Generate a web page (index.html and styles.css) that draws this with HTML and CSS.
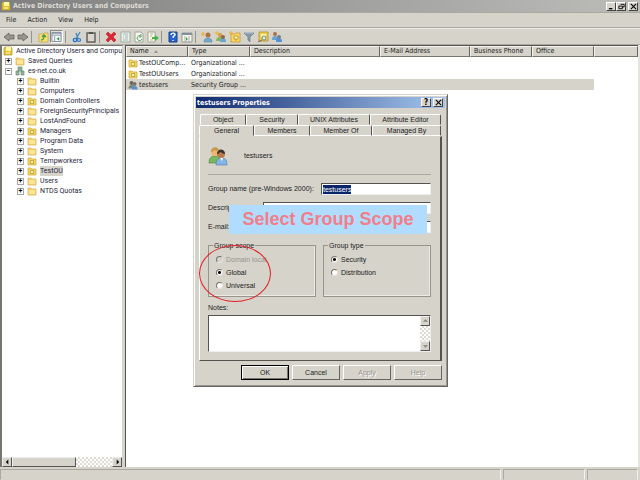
FILE: index.html
```html
<!DOCTYPE html>
<html lang="en">
<head>
<meta charset="utf-8">
<title>Active Directory Users and Computers</title>
<link rel="stylesheet" href="styles.css">
</head>
<body>
<svg class="defs" aria-hidden="true">
  <symbol id="i-folder" viewBox="0 0 10 10"><path d="M1 2h3l1 1h4v6H1z" fill="#f3d36f" stroke="#d9b764" stroke-width=".8"/><path d="M2 4h6v4H2z" fill="#fbe596"/></symbol>
  <symbol id="i-ou" viewBox="0 0 10 10"><path d="M1 2h3l1 1h4v6H1z" fill="#f3d658" stroke="#cfae4a" stroke-width=".8"/><path d="M3.500 4.500h3v3h-3z" fill="#fff2a5" stroke="#a8923e" stroke-width=".7"/></symbol>
  <symbol id="i-book" viewBox="0 0 10 10"><path d="M2 1h6l1 1v7H1V2z" fill="#e6c62f" stroke="#a8933b" stroke-width=".7"/><path d="M3 1h5v4H3z" fill="#fff7a8"/><path d="M3 7h4" stroke="#fffbd5"/></symbol>
  <symbol id="i-domain" viewBox="0 0 10 10"><path d="M3 1h4v4H3zM1 5h3v4H1zM6 5h3v4H6z" fill="#9fb5a4" stroke="#6f8776" stroke-width=".7"/><path d="M4 2h2M2 6h1M7 6h1" stroke="#4bbf5d"/></symbol>
  <symbol id="i-group" viewBox="0 0 20 20"><path d="M1 17c0-5 2-7 6-7s5 3 5 7z" fill="#78b85c" stroke="#4b8540" stroke-width=".6"/><circle cx="7" cy="6" r="4" fill="#efb66d"/><path d="M3 6c0-6 8-6 8-1-3 0-4-1-5-1-1 1-1 2-3 2z" fill="#c9974b"/><path d="M8 19c0-5 2-7 6-7s5 3 5 7z" fill="#85b5e5" stroke="#5079ad" stroke-width=".6"/><circle cx="13" cy="8" r="4" fill="#b87b4c"/><path d="M9 8c0-6 8-6 8 0-2 0-4-2-5-2-1 1-1 2-3 2z" fill="#38332f"/><path d="M12 12l2 3 1-3z" fill="#fff"/></symbol>
  <symbol id="i-gray-group" viewBox="0 0 20 20"><path d="M1 17c0-5 2-7 6-7s5 3 5 7z" fill="#738872"/><circle cx="7" cy="6" r="4" fill="#6d6759"/><path d="M8 19c0-5 2-7 6-7s5 3 5 7z" fill="#5c8fd2"/><circle cx="13" cy="8" r="4" fill="#77716d"/></symbol>
  <symbol id="i-back" viewBox="0 0 12 12"><path d="M1 6l5-4v2h5v4H6v2z" fill="#96958e" stroke="#63625d" stroke-width=".8"/></symbol>
  <symbol id="i-forward" viewBox="0 0 12 12"><path d="M11 6L6 2v2H1v4h5v2z" fill="#96958e" stroke="#63625d" stroke-width=".8"/></symbol>
  <symbol id="i-up" viewBox="0 0 12 12"><path d="M2 3h4l1-1h4v9H2z" fill="#f6df73" stroke="#c8a846" stroke-width=".8"/><path d="M4 9c3 0 3-2 3-4M5 6l2-2 2 2" fill="none" stroke="#40983b" stroke-width="1.300"/></symbol>
  <symbol id="i-window" viewBox="0 0 12 12"><path d="M1 1h10v10H1z" fill="#f7f8f8" stroke="#7b8794"/><path d="M1 2h10M1 4h10" stroke="#8393ac"/><path d="M4 5v6" stroke="#8793a0"/><path d="M9 6v4L6 8z" fill="#3a9b54"/></symbol>
  <symbol id="i-cut" viewBox="0 0 12 12"><path d="M9 1L5 8M5 2l2 6" stroke="#4287bd" stroke-width="1.300"/><circle cx="4" cy="9" r="1.700" fill="none" stroke="#2674c5" stroke-width="1.300"/><circle cx="8" cy="9" r="1.500" fill="none" stroke="#2674c5" stroke-width="1.200"/></symbol>
  <symbol id="i-paste" viewBox="0 0 12 12"><path d="M2 2h8v9H2z" fill="#d9d7d0" stroke="#64635f" stroke-width="1.500"/><path d="M4 1h4v2H4z" fill="#55544f"/></symbol>
  <symbol id="i-delete" viewBox="0 0 12 12"><path d="M1 3l2-2 3 3 3-3 2 2-3 3 3 3-2 2-3-3-3 3-2-2 3-3z" fill="#df2632" stroke="#a91824" stroke-width=".5"/></symbol>
  <symbol id="i-props" viewBox="0 0 12 12"><path d="M2 1h9v10H2z" fill="#eef2ed" stroke="#9ca9a3"/><path d="M4 3h5M4 5h1M6 5h3M4 7h1M6 7h3M4 9h5" stroke="#88aaa0" stroke-width=".8"/></symbol>
  <symbol id="i-refresh" viewBox="0 0 12 12"><path d="M2 1h6l2 2v8H2z" fill="#f4f4ee" stroke="#a4a6a0"/><path d="M8 5a2.500 2.500 0 1 0 1 3M8 3v3H6" fill="none" stroke="#55aa62"/></symbol>
  <symbol id="i-export" viewBox="0 0 12 12"><path d="M1 1h7v10H1z" fill="#fafae9" stroke="#a4a491"/><path d="M3 3h3M3 5h2M3 9h3" stroke="#b4b4a6"/><path d="M5 6h3V4l4 3-4 3V8H5z" fill="#45b448"/></symbol>
  <symbol id="i-help" viewBox="0 0 12 12"><path d="M2 1h8v10H2z" fill="#2864cc" stroke="#173f91"/><path d="M4 4c0-3 5-2 4 0-1 1-2 1-2 3M6 9v1" fill="none" stroke="#fff" stroke-width="1.300"/></symbol>
  <symbol id="i-view" viewBox="0 0 12 12"><path d="M1 2h10v9H1z" fill="#f5f6ef" stroke="#919990"/><path d="M1 3h10" stroke="#83909b" stroke-width="2"/><path d="M4 5v6M8 5v6" stroke="#abafaa"/><path d="M5 6l2 2-2 2z" fill="#46a34d"/></symbol>
  <symbol id="i-user" viewBox="0 0 12 12"><path d="M3 11c0-3 2-4 4-4s4 1 4 4z" fill="#72a9cf" stroke="#52789c" stroke-width=".5"/><circle cx="7" cy="4" r="2.500" fill="#a97546"/><path d="M2 1v4M0 3h4" stroke="#f2b326" stroke-width="1.200"/></symbol>
  <symbol id="i-newgroup" viewBox="0 0 12 12"><path d="M1 10c0-3 2-4 4-4s3 2 3 4z" fill="#81b75c"/><circle cx="5" cy="4" r="2.200" fill="#d99e50"/><path d="M5 11c0-3 1-4 3-4s3 1 3 4z" fill="#6ba2d3"/><circle cx="8" cy="6" r="2" fill="#8c6849"/><path d="M2 0v4M0 2h4" stroke="#f2b326"/></symbol>
  <symbol id="i-addto" viewBox="0 0 12 12"><path d="M1 9c0-3 1-4 3-4s3 1 3 4z" fill="#6ba2d3"/><circle cx="4" cy="3" r="2" fill="#a97546"/><path d="M5 11c0-3 1-4 3-4s3 1 3 4z" fill="#4f93d6"/><circle cx="8" cy="6" r="2" fill="#77818b"/></symbol>
  <symbol id="i-newou" viewBox="0 0 12 12"><path d="M2 3h4l1-1h4v9H2z" fill="#f8da62" stroke="#c99a37" stroke-width=".8"/><path d="M5 5h4v3H5zM7 8v2" fill="#fff6ba" stroke="#b58b30" stroke-width=".8"/><path d="M2 0v4M0 2h4" stroke="#f0ae29"/></symbol>
  <symbol id="i-filter" viewBox="0 0 12 12"><path d="M1 2h10L7 6v5L5 9V6z" fill="#819aac" stroke="#6a7b88" stroke-width=".7"/><path d="M2 2h8" stroke="#b7cad5"/></symbol>
  <symbol id="i-find" viewBox="0 0 12 12"><path d="M2 1h9v9H2z" fill="#edcf4f" stroke="#b18e34" stroke-width=".8"/><path d="M4 3h5v3H4z" fill="#fff6af"/><circle cx="7" cy="7" r="2" fill="#e5f2e4" stroke="#718778"/><path d="M1 11l4-2" stroke="#796c44"/></symbol>
</svg>
<main class="console">
  <header class="titlebar">
    <svg class="ic10"><use href="#i-book"/></svg>
    <h1>Active Directory Users and Computers</h1>
    <div class="winbtns">
      <button class="cap" aria-label="Minimize"><svg viewBox="0 0 8 8"><path d="M1 6.500h4" stroke="#000" stroke-width="1.500"/></svg></button><button class="cap" aria-label="Restore"><svg viewBox="0 0 8 8"><path d="M3 1.500h4v3H5M1 3.500h4v3H1z" fill="none" stroke="#000"/></svg></button><button class="cap apart" aria-label="Close"><svg viewBox="0 0 8 8"><path d="M1 1l6 6M7 1L1 7" stroke="#000" stroke-width="1.200"/></svg></button>
    </div>
  </header>
  <nav class="menubar"><button>File</button><button>Action</button><button>View</button><button>Help</button></nav>
  <div class="toolbar">
    <button aria-label="Back"><svg><use href="#i-back"/></svg></button>
    <button aria-label="Forward"><svg><use href="#i-forward"/></svg></button>
    <i class="sep"></i>
    <button aria-label="Up one level"><svg><use href="#i-up"/></svg></button>
    <button class="on" aria-label="Show console tree"><svg><use href="#i-window"/></svg></button>
    <i class="sep"></i>
    <button aria-label="Cut"><svg><use href="#i-cut"/></svg></button>
    <button aria-label="Paste"><svg><use href="#i-paste"/></svg></button>
    <i class="sep"></i>
    <button aria-label="Delete"><svg><use href="#i-delete"/></svg></button>
    <button aria-label="Properties"><svg><use href="#i-props"/></svg></button>
    <button aria-label="Refresh"><svg><use href="#i-refresh"/></svg></button>
    <button aria-label="Export list"><svg><use href="#i-export"/></svg></button>
    <i class="sep"></i>
    <button aria-label="Help topics"><svg><use href="#i-help"/></svg></button>
    <button aria-label="Action pane"><svg><use href="#i-view"/></svg></button>
    <i class="sep"></i>
    <button aria-label="New user"><svg><use href="#i-user"/></svg></button>
    <button aria-label="New group"><svg><use href="#i-newgroup"/></svg></button>
    <button aria-label="New organizational unit"><svg><use href="#i-newou"/></svg></button>
    <button aria-label="Filter"><svg><use href="#i-filter"/></svg></button>
    <button aria-label="Find"><svg><use href="#i-find"/></svg></button>
    <button aria-label="Add to group"><svg><use href="#i-addto"/></svg></button>
  </div>
  <div class="panes">
    <section class="treepane">
      <ul class="tree">
        <li class="root"><svg class="ic10"><use href="#i-book"/></svg><span>Active Directory Users and Comput</span></li>
        <li><b class="box">+</b><svg class="ic10"><use href="#i-folder"/></svg><span>Saved Queries</span></li>
        <li><b class="box">−</b><svg class="ic10"><use href="#i-domain"/></svg><span>es-net.co.uk</span></li>
      </ul>
      <ul class="tree sub">
        <li><b class="box">+</b><svg class="ic10"><use href="#i-folder"/></svg><span>Builtin</span></li>
        <li><b class="box">+</b><svg class="ic10"><use href="#i-folder"/></svg><span>Computers</span></li>
        <li><b class="box">+</b><svg class="ic10"><use href="#i-ou"/></svg><span>Domain Controllers</span></li>
        <li><b class="box">+</b><svg class="ic10"><use href="#i-folder"/></svg><span>ForeignSecurityPrincipals</span></li>
        <li><b class="box">+</b><svg class="ic10"><use href="#i-folder"/></svg><span>LostAndFound</span></li>
        <li><b class="box">+</b><svg class="ic10"><use href="#i-ou"/></svg><span>Managers</span></li>
        <li><b class="box">+</b><svg class="ic10"><use href="#i-folder"/></svg><span>Program Data</span></li>
        <li><b class="box">+</b><svg class="ic10"><use href="#i-folder"/></svg><span>System</span></li>
        <li><b class="box">+</b><svg class="ic10"><use href="#i-ou"/></svg><span>Tempworkers</span></li>
        <li><b class="box">+</b><svg class="ic10"><use href="#i-ou"/></svg><span class="sel">TestOU</span></li>
        <li><b class="box">+</b><svg class="ic10"><use href="#i-folder"/></svg><span>Users</span></li>
        <li><b class="box">+</b><svg class="ic10"><use href="#i-folder"/></svg><span>NTDS Quotas</span></li>
      </ul>
      <div class="hscroll"><button class="sb" aria-label="Scroll left"><svg viewBox="0 0 6 6"><path d="M4 0v6L1 3z"/></svg></button><div class="thumb"></div><div class="track"></div><button class="sb" aria-label="Scroll right"><svg viewBox="0 0 6 6"><path d="M2 0v6l3-3z"/></svg></button></div>
    </section>
    <section class="listpane">
      <table>
        <colgroup><col class="c1"><col class="c2"><col class="c3"><col class="c4"><col class="c5"><col class="c6"><col></colgroup>
        <thead><tr><th>Name <i class="asc"></i></th><th>Type</th><th>Description</th><th>E-Mail Address</th><th>Business Phone</th><th>Office</th><th></th></tr></thead>
        <tbody>
          <tr><td><div class="cell"><svg class="ic10"><use href="#i-ou"/></svg>TestOUComp...</div></td><td>Organizational ...</td><td></td><td></td><td></td><td></td><td></td></tr>
          <tr><td><div class="cell"><svg class="ic10"><use href="#i-ou"/></svg>TestOUUsers</div></td><td>Organizational ...</td><td></td><td></td><td></td><td></td><td></td></tr>
          <tr class="picked"><td><div class="cell"><svg class="ic10"><use href="#i-gray-group"/></svg>testusers</div></td><td>Security Group ...</td><td></td><td></td><td></td><td></td><td></td></tr>
        </tbody>
      </table>
    </section>
  </div>
  <footer class="status"><span class="s1"></span><span class="s2"></span><span class="s3"></span></footer>

  <form class="dialog" role="dialog" aria-labelledby="dlg">
    <div class="dtitle"><h2 id="dlg">testusers Properties</h2><button type="button" class="cap" aria-label="Help"><b>?</b></button><button type="button" class="cap apart" aria-label="Close"><svg viewBox="0 0 8 8"><path d="M1 1l6 6M7 1L1 7" stroke="#000" stroke-width="1.200"/></svg></button></div>
    <div class="dbody">
      <div class="tabs back"><button type="button" class="w46">Object</button><button type="button" class="w52">Security</button><button type="button" class="w72">UNIX Attributes</button><button type="button" class="w70">Attribute Editor</button></div>
      <div class="tabs"><button type="button" class="w55 active">General</button><button type="button" class="w56">Members</button><button type="button" class="w62">Member Of</button><button type="button" class="w68">Managed By</button></div>
      <div class="panel">
        <div class="who"><svg><use href="#i-group"/></svg><span>testusers</span></div>
        <div class="field"><label for="gn">Group name (pre-Windows 2000):</label><div class="textbox"><input id="gn" value="testusers"></div></div>
        <div class="field near"><label for="ds">Description:</label><input id="ds" class="plain"></div>
        <div class="field near"><label for="em">E-mail:</label><input id="em" class="plain"></div>
        <div class="groups">
          <fieldset><legend>Group scope</legend>
            <label class="off"><input type="radio" name="scope" disabled>Domain local</label>
            <label><input type="radio" name="scope" checked>Global</label>
            <label><input type="radio" name="scope">Universal</label>
          </fieldset>
          <fieldset><legend>Group type</legend>
            <label><input type="radio" name="type" checked>Security</label>
            <label><input type="radio" name="type">Distribution</label>
          </fieldset>
        </div>
        <label class="notes" for="nt">Notes:</label>
        <div class="memo"><textarea id="nt"></textarea><div class="vscroll"><button type="button" class="sb dim" aria-label="Scroll up"><svg viewBox="0 0 6 6"><path d="M0 4h6L3 1z"/></svg></button><div class="track"></div><button type="button" class="sb dim" aria-label="Scroll down"><svg viewBox="0 0 6 6"><path d="M0 2h6L3 5z"/></svg></button></div></div>
      </div>
      <div class="actions"><button type="button" class="default">OK</button><button type="button">Cancel</button><button type="button" disabled>Apply</button><button type="button" disabled>Help</button></div>
    </div>
    <div class="ring"></div>
    <div class="callout">Select Group Scope</div>
  </form>
</main>
</body>
</html>
```
FILE: styles.css
```css
* { box-sizing: border-box; }
body { margin: 0; background: #d6d3cb; color: #222; font: 7px/10px "DejaVu Sans Condensed", "DejaVu Sans", sans-serif; }
button, input, textarea { font: inherit; color: inherit; margin: 0; padding: 0; border: 0; border-radius: 0; background: none; }
h1, h2, ul { margin: 0; padding: 0; font-size: inherit; list-style: none; }
.defs { position: absolute; width: 0; height: 0; }
.ic10 { width: 10px; height: 10px; flex: none; }
.console { display: flex; flex-direction: column; height: 100vh; position: relative; overflow: hidden; }

.titlebar { display: flex; align-items: center; gap: 2px; height: 12px; flex: none; padding: 0 2px 0 1px; background: linear-gradient(90deg, #808080, #bcbcb9); color: #dedcd5; }
.titlebar h1 { flex: 1; }
.winbtns { display: flex; }
.cap { width: 10px; height: 9px; flex: none; background: #d6d3cb; border: 1px solid; border-color: #fff #444 #444 #fff; color: #000; display: flex; align-items: center; justify-content: center; font-size: 8px; line-height: 7px; }
.cap svg { width: 7px; height: 7px; }
.apart { margin-left: 2px; }

.menubar { display: flex; align-items: center; gap: 11px; height: 16px; flex: none; padding: 0 6px; border-top: 1px solid #aaa8a2; border-bottom: 1px solid #aaa8a2; }
.toolbar { display: flex; align-items: center; gap: 1px; height: 17px; flex: none; padding: 0 2px; border-top: 1px solid #eeece7; border-bottom: 1px solid #aaa8a2; }
.toolbar button { width: 13px; height: 13px; padding: 0; display: flex; align-items: center; justify-content: center; flex: none; }
.toolbar button svg { width: 12px; height: 12px; }
.toolbar .on { background: #eceae6; border: 1px solid; border-color: #888 #fff #fff #888; }
.toolbar .sep { width: 4px; height: 12px; flex: none; border-left: 1px solid #96948d; margin-left: 1px; }

.panes { display: flex; flex: 1; min-height: 0; gap: 2px; border-right: 2px solid #e6e4df; }
.treepane { width: 123px; flex: none; display: flex; flex-direction: column; background: #fff; border-left: 2px solid #77756f; border-top: 1px solid #77756f; border-right: 1px solid #d6d3cb; overflow: hidden; }
.tree { padding-left: 3px; color: #28283c; font-family: Roboto, "Liberation Sans", sans-serif; }
.tree li { display: flex; align-items: center; height: 10px; gap: 3px; white-space: nowrap; }
.tree .root { margin-left: -2px; }
.tree.sub { padding-left: 15px; flex: 1; }
.tree .box { width: 7px; height: 7px; flex: none; border: 1px solid #a4a4a4; line-height: 5px; text-align: center; color: #000; }
.tree .sel { background: #d6d3cb; }
.hscroll { display: flex; height: 10px; flex: none; }
.sb { width: 10px; height: 10px; flex: none; background: #d6d3cb; border: 1px solid; border-color: #eee #555 #555 #eee; display: flex; align-items: center; justify-content: center; }
.sb svg { width: 5px; height: 6px; fill: #000; }
.dim svg { fill: #85837d; }
.thumb { flex: 7; background: #d6d3cb; border: 1px solid; border-color: #eee #555 #555 #eee; }
.track { flex: 4; background: repeating-conic-gradient(#dedbd4 0 25%, #fff 0 50%) 0 0 / 4px 4px; }

.listpane { flex: 1; min-width: 0; background: #fff; border-left: 1px solid #55534f; border-top: 1px solid #55534f; overflow: hidden; }
table { width: 100%; table-layout: fixed; border-collapse: separate; border-spacing: 0; }
.c1, .c2, .c5, .c6 { width: 62px; }
.c3 { width: 130px; }
.c4 { width: 90px; }
th { height: 11px; padding: 0 3px; text-align: left; font-weight: normal; line-height: 9px; background: #d6d3cb; border: 1px solid; border-color: #f4f2ee #66645f #77756f #f4f2ee; white-space: nowrap; }
td { height: 11px; padding: 0 3px; line-height: 10px; white-space: nowrap; overflow: hidden; }
td:first-child { padding: 0 1px 0 2px; }
.cell { display: flex; align-items: center; gap: 1px; }
.asc { display: inline-block; margin-left: 3px; border: 2px solid transparent; border-top: 0; border-bottom: 3px solid #96948d; }
.picked td { background: #d6d3cb; }
.picked td:last-child { background: #fff; }

.status { display: flex; gap: 2px; height: 13px; flex: none; border-top: 2px solid #d6d3cb; padding-right: 2px; }
.status span { border: 1px solid; border-color: #aaa8a2 #f3f1ed #d6d3cb #aaa8a2; }
.s1 { flex: 1; }
.s2 { width: 82px; }
.s3 { width: 51px; }

.dialog { position: absolute; left: 193px; top: 94px; width: 255px; background: #d6d3cb; border: 1px solid; border-color: #d6d3cb #666 #666 #d6d3cb; box-shadow: inset 1px 1px #fff, inset -1px -1px #99978f; padding: 2px; font: 7px/10px "Liberation Sans", Arial, sans-serif; }
.dtitle { display: flex; align-items: center; height: 11px; padding: 0 2px 0 1px; background: linear-gradient(90deg, #102a70, #a5c6ee); color: #fff; font-family: "DejaVu Sans Condensed", "DejaVu Sans", sans-serif; }
.dtitle h2 { flex: 1; }
.dbody { padding: 6px 3px 4px; }
.tabs { display: flex; height: 11px; }
.tabs button { border: 1px solid; border-color: #fff #55534f transparent #fff; border-radius: 2px 2px 0 0; line-height: 9px; flex-shrink: 0; }
.back { padding-left: 1px; }
.w46 { width: 46px; } .w52 { width: 52px; } .w72 { width: 72px; } .w70 { width: 71px; }
.w55 { width: 55px; } .w56 { width: 56px; } .w62 { width: 62px; } .w68 { width: 69px; }
.tabs:not(.back) button:not(.active) { border-bottom-color: #fff; }
.panel { border: 1px solid; border-color: transparent #55534f #55534f #fff; border-right-width: 2px; padding: 9px 9px 8px 8px; }
.who { display: flex; align-items: center; gap: 16px; height: 29px; padding-bottom: 8px; border-bottom: 1px solid #a9a7a0; }
.who svg { width: 20px; height: 20px; }
.field { display: flex; align-items: center; height: 12px; margin-top: 8px; }
.near { margin-top: 7px; }
.field label { width: 113px; flex: none; white-space: nowrap; }
.near label { width: 55px; }
.plain, .textbox { flex: 1; min-width: 0; height: 12px; background: #fff; border: 1px solid; border-color: #55534f #eee #eee #55534f; }
.textbox { display: flex; align-items: center; padding-left: 1px; }
.textbox input { field-sizing: content; height: 9px; background: #0a246a; color: #fff; line-height: 9px; }
.groups { display: grid; grid-template-columns: 1fr 1fr; gap: 7px; margin-top: 7px; }
fieldset { height: 57px; min-width: 0; margin: 0; padding: 2px 7px 0; border: 1px solid #96948d; box-shadow: inset -1px -1px #eceae5; }
legend { padding: 0 1px; margin-left: -3px; line-height: 11px; }
fieldset label { display: flex; align-items: center; gap: 3px; height: 13px; }
.off { color: #96948d; }
fieldset input { appearance: none; width: 7px; height: 7px; border-radius: 50%; background: #fff; border: 1px solid; border-color: #77756f #e4e2dd #e4e2dd #77756f; }
fieldset input:checked { background: radial-gradient(circle, #000 0 1px, #fff 2px); }
fieldset input:disabled { background: #d6d3cb; }
.notes { display: block; margin-top: 6px; }
.memo { display: flex; height: 37px; margin-top: 2px; background: #fff; border: 1px solid; border-color: #55534f #eee #eee #55534f; }
.memo textarea { flex: 1; resize: none; min-width: 0; }
.vscroll { display: flex; flex-direction: column; width: 10px; }
.actions { display: flex; justify-content: flex-end; gap: 3px; padding-top: 4px; }
.actions button { width: 48px; height: 15px; border: 1px solid; border-color: #fff #66645f #66645f #fff; }
.actions .default { border: 1px solid #000; box-shadow: inset 1px 1px #fff, inset -1px -1px #77756f; }
.actions button:disabled { color: #96948d; text-shadow: 1px 1px #fff; }
.ring { position: absolute; left: 5px; top: 150px; width: 72px; height: 57px; border: 1px solid #e02020; border-radius: 50%; }
.callout { position: absolute; left: 35px; top: 110px; width: 198px; height: 29px; background: #b0dcff; color: #f07f8a; font: bold 18px/29px "Liberation Sans", Arial, sans-serif; text-align: center; }
```
